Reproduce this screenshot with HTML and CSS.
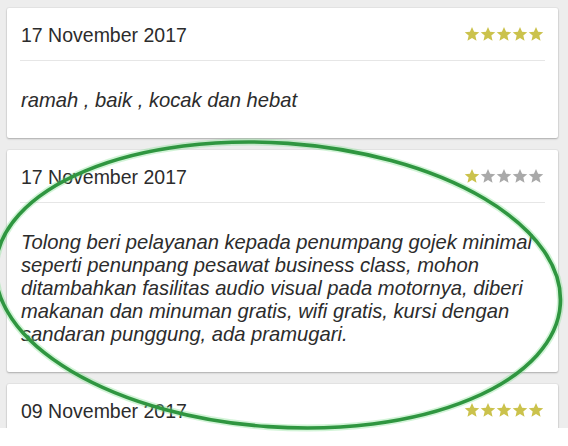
FILE: index.html
```html
<!DOCTYPE html>
<html>
<head>
<meta charset="utf-8">
<link rel="stylesheet" href="styles.css">
</head>
<body>
<div class="screen">
  <div class="card">
    <div class="head">
      <span class="date">17 November 2017</span>
      <span class="stars">
        <svg class="star on" viewBox="0 0 24 24"><path d="M12 1.5l3.1 7.2 7.8.6-5.9 5.1 1.8 7.6L12 18l-6.8 4 1.8-7.6-5.9-5.1 7.8-.6z"/></svg>
        <svg class="star on" viewBox="0 0 24 24"><path d="M12 1.5l3.1 7.2 7.8.6-5.9 5.1 1.8 7.6L12 18l-6.8 4 1.8-7.6-5.9-5.1 7.8-.6z"/></svg>
        <svg class="star on" viewBox="0 0 24 24"><path d="M12 1.5l3.1 7.2 7.8.6-5.9 5.1 1.8 7.6L12 18l-6.8 4 1.8-7.6-5.9-5.1 7.8-.6z"/></svg>
        <svg class="star on" viewBox="0 0 24 24"><path d="M12 1.5l3.1 7.2 7.8.6-5.9 5.1 1.8 7.6L12 18l-6.8 4 1.8-7.6-5.9-5.1 7.8-.6z"/></svg>
        <svg class="star on" viewBox="0 0 24 24"><path d="M12 1.5l3.1 7.2 7.8.6-5.9 5.1 1.8 7.6L12 18l-6.8 4 1.8-7.6-5.9-5.1 7.8-.6z"/></svg>
      </span>
    </div>
    <p class="text">ramah , baik , kocak dan hebat</p>
  </div>
  <div class="card">
    <div class="head">
      <span class="date">17 November 2017</span>
      <span class="stars">
        <svg class="star on" viewBox="0 0 24 24"><path d="M12 1.5l3.1 7.2 7.8.6-5.9 5.1 1.8 7.6L12 18l-6.8 4 1.8-7.6-5.9-5.1 7.8-.6z"/></svg>
        <svg class="star off" viewBox="0 0 24 24"><path d="M12 1.5l3.1 7.2 7.8.6-5.9 5.1 1.8 7.6L12 18l-6.8 4 1.8-7.6-5.9-5.1 7.8-.6z"/></svg>
        <svg class="star off" viewBox="0 0 24 24"><path d="M12 1.5l3.1 7.2 7.8.6-5.9 5.1 1.8 7.6L12 18l-6.8 4 1.8-7.6-5.9-5.1 7.8-.6z"/></svg>
        <svg class="star off" viewBox="0 0 24 24"><path d="M12 1.5l3.1 7.2 7.8.6-5.9 5.1 1.8 7.6L12 18l-6.8 4 1.8-7.6-5.9-5.1 7.8-.6z"/></svg>
        <svg class="star off" viewBox="0 0 24 24"><path d="M12 1.5l3.1 7.2 7.8.6-5.9 5.1 1.8 7.6L12 18l-6.8 4 1.8-7.6-5.9-5.1 7.8-.6z"/></svg>
      </span>
    </div>
    <p class="text">Tolong beri pelayanan kepada penumpang gojek minimal<br>seperti penunpang pesawat business class, mohon<br>ditambahkan fasilitas audio visual pada motornya, diberi<br>makanan dan minuman gratis, wifi gratis, kursi dengan<br>sandaran punggung, ada pramugari.</p>
  </div>
  <div class="card">
    <div class="head">
      <span class="date">09 November 2017</span>
      <span class="stars">
        <svg class="star on" viewBox="0 0 24 24"><path d="M12 1.5l3.1 7.2 7.8.6-5.9 5.1 1.8 7.6L12 18l-6.8 4 1.8-7.6-5.9-5.1 7.8-.6z"/></svg>
        <svg class="star on" viewBox="0 0 24 24"><path d="M12 1.5l3.1 7.2 7.8.6-5.9 5.1 1.8 7.6L12 18l-6.8 4 1.8-7.6-5.9-5.1 7.8-.6z"/></svg>
        <svg class="star on" viewBox="0 0 24 24"><path d="M12 1.5l3.1 7.2 7.8.6-5.9 5.1 1.8 7.6L12 18l-6.8 4 1.8-7.6-5.9-5.1 7.8-.6z"/></svg>
        <svg class="star on" viewBox="0 0 24 24"><path d="M12 1.5l3.1 7.2 7.8.6-5.9 5.1 1.8 7.6L12 18l-6.8 4 1.8-7.6-5.9-5.1 7.8-.6z"/></svg>
        <svg class="star on" viewBox="0 0 24 24"><path d="M12 1.5l3.1 7.2 7.8.6-5.9 5.1 1.8 7.6L12 18l-6.8 4 1.8-7.6-5.9-5.1 7.8-.6z"/></svg>
      </span>
    </div>
    <p class="text">&nbsp;</p>
  </div>
</div>
<svg class="circle" width="568" height="446" viewBox="0 0 568 446">
  <ellipse class="glow" cx="278" cy="285" rx="283" ry="142" transform="rotate(4 278 285)"/>
  <ellipse class="ring" cx="278" cy="285" rx="283" ry="142" transform="rotate(4 278 285)"/>
</svg>
</body>
</html>
```

FILE: styles.css
```css
html, body {
  margin: 0;
  padding: 0;
  background: #ffffff;
}
body {
  position: relative;
  width: 568px;
  height: 446px;
  overflow: hidden;
  font-family: "Liberation Sans", Arial, sans-serif;
  color: #2e2e2e;
}
.screen {
  height: 428px;
  overflow: hidden;
  background: #ededed;
  padding: 8px 10px 0 7px;
  box-sizing: border-box;
  display: flex;
  flex-direction: column;
  gap: 12px;
}
.card {
  background: #ffffff;
  border-radius: 2px;
  box-shadow: 0 1px 2px rgba(0, 0, 0, 0.25), 0 0 0 1px rgba(0, 0, 0, 0.03);
  flex-shrink: 0;
}
.head {
  margin: 0 13px;
  padding: 16px 1px 13px 1px;
  border-bottom: 1px solid #e6e6e6;
  display: flex;
  justify-content: space-between;
  align-items: center;
}
.date {
  font-size: 19.5px;
  line-height: 23px;
  color: #2c2c2c;
}
.stars {
  display: flex;
  margin-top: -3px;
}
.star {
  width: 16px;
  height: 16px;
  display: block;
}
.star.on path { fill: #cbc24c; }
.star.off path { fill: #a9a9a9; }
.text {
  margin: 0;
  padding: 28px 14px 26px;
  font-size: 20.2px;
  line-height: 23px;
  font-style: italic;
  white-space: nowrap;
  color: #2c2c2c;
}
.circle {
  position: absolute;
  left: 0;
  top: 0;
  pointer-events: none;
}
.glow {
  fill: none;
  stroke: #7fe08c;
  stroke-opacity: 0.35;
  stroke-width: 7;
}
.ring {
  fill: none;
  stroke: #2f9640;
  stroke-width: 3.6;
}
```
